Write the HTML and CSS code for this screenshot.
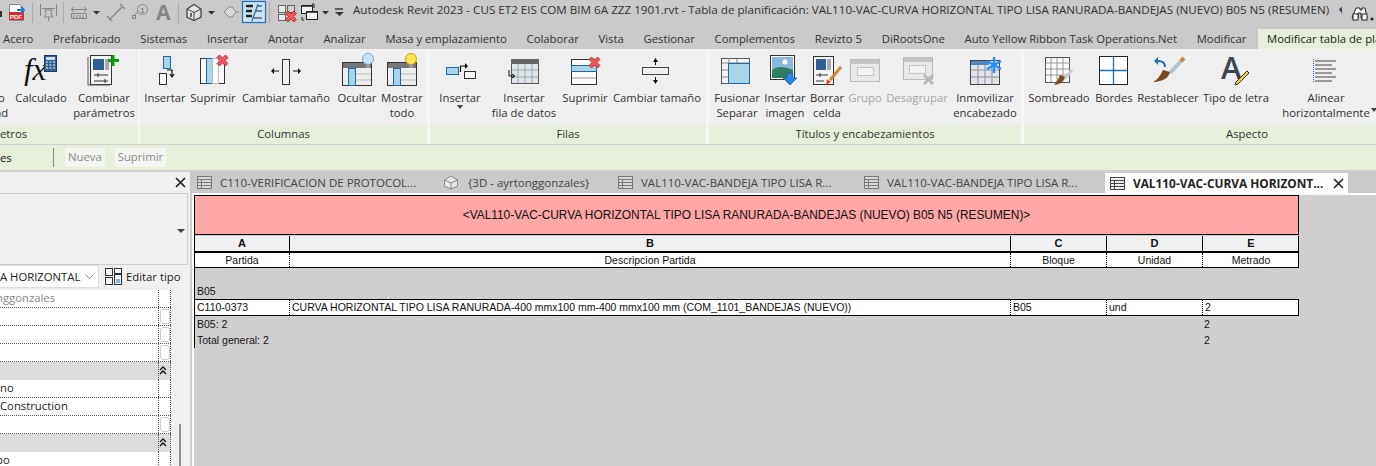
FILE: index.html
```html
<!DOCTYPE html>
<html lang="es">
<head>
<meta charset="utf-8">
<title>Autodesk Revit 2023</title>
<link rel="stylesheet" href="styles.css">
</head>
<body>
<svg width="0" height="0" class="defs">
  <defs>
    <g id="sheet"><rect x=".5" y=".5" width="14" height="12" fill="#d8d8d8" stroke="#777"/><path d="M1 3.500h13M1 6.500h13M1 9.500h13M4.500 3v9" stroke="#777" fill="none"/></g>
    <g id="redx"><path d="M0 2.500L2.500 0 5.500 3 8.500 0 11 2.500 8 5.500l3 3L8.500 11l-3-3-3 3L0 8.500l3-3z" fill="#f0595a" stroke="#a32020" stroke-width=".8"/></g>
    <g id="dbl"><path d="M1 5l3-3 3 3M1 9l3-3 3 3" fill="none" stroke="#111" stroke-width="1.300"/></g>
  </defs>
</svg>
<header class="titlebar">
  <svg class="qat" width="345" height="29" viewBox="0 0 345 29">
    <rect x="0" y="11" width="2" height="6" fill="#333"/>
    <path d="M9.500 4.500h10l4 4v12h-14z" fill="#fff" stroke="#888"/><rect x="9" y="12" width="15" height="8" fill="#d32f2f"/><text x="10" y="19" class="pdf">PDF</text><path d="M17 10h6M21 7l3 3-3 3" stroke="#1976d2" stroke-width="1.800" fill="none"/>
    <path d="M32.500 2v21M63.500 2v21M178.500 2v21M269.500 2v21" stroke="#aaa"/>
    <g stroke="#858585" fill="none">
      <path d="M40.500 4v12M56.500 4v12M42 8.500h13"/><path d="M45 10h7l-1 4 2 3h-9l2-3zM48.500 17v4"/>
      <path d="M71.500 13.500h15v5h-15zM74 15v3M77 15v3M80 15v3M83 15v3M72 9.500h14"/><path d="M74 7l-3 2.500 3 2.500M84 7l3 2.500-3 2.500"/>
      <path d="M109 20l14-14M107 16l5 5M120 4l5 5" stroke-width="1.400"/>
      <rect x="132.500" y="15.500" width="3" height="3"/><path d="M135 15l3-4"/><circle cx="142.500" cy="9.500" r="5"/>
    </g>
    <text x="142.500" y="12.500" class="tag">1</text>
    <path d="M93 11h7l-3.500 3.500zM208 11h7l-3.500 3.500zM322 11h7l-3.500 3.500z" fill="#333"/>
    <text x="156" y="20" class="qat-a">A</text>
    <path d="M187 9l7-4.500 7 4.500v8l-7 3.500-7-3.500z" fill="#e4e4e4" stroke="#444" stroke-width="1.300"/><path d="M187 9l7 3.500 7-3.500M194 12.500v8" stroke="#444" fill="none"/><rect x="190" y="13" width="2" height="4" fill="#666"/>
    <path d="M224 12l5-5h3l4 5-4 5h-3z" fill="#d9d9d9" stroke="#8a8a8a"/><path d="M236 12h3" stroke="#8a8a8a"/>
    <rect x="242.500" y="1.500" width="23" height="21" fill="#cfe3f6" stroke="#1a6fc0" stroke-width="1.200"/><path d="M246 6h7M246 11h6M246 16h6" stroke="#222" stroke-width="2.600"/><path d="M257 6h5M256 11h6M254 18h8" stroke="#222" stroke-width="1"/><path d="M258 4l-6 17" stroke="#1a6fc0" stroke-width="1.300"/>
    <g fill="#e8e8e8" stroke="#666"><rect x="278.500" y="5.500" width="7" height="7"/><rect x="287.500" y="5.500" width="7" height="7" fill="#d0d0d0"/><rect x="278.500" y="14.500" width="7" height="6"/></g><use href="#redx" x="285.500" y="11"/>
    <g fill="#f4f4f4" stroke="#222"><rect x="301.500" y="5.500" width="11" height="8"/><rect x="306.500" y="11.500" width="11" height="8"/></g><path d="M302 6h10M307 12h10" stroke="#222" stroke-width="1.500"/><path d="M314 8V4h-2M302 17v3h2" stroke="#222" fill="none"/>
    <path d="M335 9h8" stroke="#333" stroke-width="1.400"/><path d="M335 12h9l-4.500 4z" fill="#333"/>
  </svg>
  <h1 class="doc-title">Autodesk Revit 2023 - CUS ET2 EIS COM BIM 6A ZZZ 1901.rvt - Tabla de planificación: VAL110-VAC-CURVA HORIZONTAL TIPO LISA RANURADA-BANDEJAS (NUEVO) B05 N5 (RESUMEN)</h1>
  <svg class="search" width="36" height="29" viewBox="0 0 36 29">
    <path d="M2 9.500l3-3v7z" fill="#444"/>
    <path d="M19 8h4v2h2V8h3l2 10h-6v-5h-3v5h-6z" fill="#fff" stroke="#222"/><rect x="16" y="14" width="5" height="6" fill="#fff" stroke="#222"/><rect x="25" y="14" width="5" height="6" fill="#fff" stroke="#222"/>
    <circle cx="35" cy="19" r="1.500" fill="#222"/>
  </svg>
</header>
<nav class="tabs">
  <span class="tab">Acero</span><span class="tab">Prefabricado</span><span class="tab">Sistemas</span><span class="tab">Insertar</span><span class="tab">Anotar</span><span class="tab">Analizar</span><span class="tab">Masa y emplazamiento</span><span class="tab">Colaborar</span><span class="tab">Vista</span><span class="tab">Gestionar</span><span class="tab">Complementos</span><span class="tab">Revizto 5</span><span class="tab">DiRootsOne</span><span class="tab">Auto Yellow Ribbon Task Operations.Net</span><span class="tab">Modificar</span><span class="tab tab-on">Modificar tabla de planificación</span>
</nav>
<section class="ribbon">
  <div class="panel p1">
    <div class="tools">
      <div class="tool w14 clip"><span class="clip-o">o</span><span class="clip-d">ad</span></div>
      <div class="tool w54"><svg class="ico" viewBox="0 0 44 34"><text x="5" y="28" class="fx">fx</text><rect x="25.500" y="3.500" width="12" height="16" fill="#2f5f96" stroke="#1b3b63"/><rect x="27" y="5" width="9" height="3" fill="#cde"/><path d="M27 10h2M30.500 10h2M34 10h2M27 13h2M30.500 13h2M34 13h2M27 16h2M30.500 16h2M34 16h2" stroke="#fff"/></svg><span>Calculado</span></div>
      <div class="tool w72"><svg class="ico" viewBox="0 0 44 34"><rect x="8.500" y="3.500" width="21" height="29" fill="#f2f2f2" stroke="#333"/><path d="M6 5v28h22" fill="none" stroke="#555"/><rect x="11" y="7" width="11" height="11" fill="#2f5f96"/><rect x="23" y="7" width="4" height="11" fill="#aaa"/><path d="M12 23h14M12 29h14M16 21v4M23 27v4" stroke="#333"/><path d="M31 3v11M26 8.500h11" stroke="#0a9a0a" stroke-width="3"/></svg><span>Combinar<br>parámetros</span></div>
    </div>
    <footer class="ptitle"><span>etros</span></footer>
  </div>
  <div class="panel p2">
    <div class="tools">
      <div class="tool w50"><svg class="ico" viewBox="0 0 44 34"><rect x="20.500" y="4.500" width="7" height="12" fill="#a9d3e6" stroke="#1e6aa8"/><rect x="16.500" y="21.500" width="7" height="11" fill="#f6f6f6" stroke="#333"/><path d="M24 18h5v6M27 22l2 3 2-3" fill="none" stroke="#111" stroke-width="1.200"/></svg><span>Insertar</span></div>
      <div class="tool w46"><svg class="ico" viewBox="0 0 44 34"><rect x="9.500" y="6.500" width="24" height="25" fill="#fafafa" stroke="#333"/><rect x="15.500" y="6.500" width="6" height="25" fill="#a9d3e6" stroke="#1e6aa8"/><rect x="21.500" y="6.500" width="6" height="25" fill="#fff" stroke="#bbb"/><use href="#redx" x="26" y="3"/></svg><span>Suprimir</span></div>
      <div class="tool w100"><svg class="ico" viewBox="0 0 44 34"><rect x="18.500" y="7.500" width="7" height="25" fill="#f0f0f0" stroke="#333"/><path d="M9 19h6M29 19h6" stroke="#111"/><path d="M10 16l-3 3 3 3zM34 16l3 3-3 3z" fill="#111"/></svg><span>Cambiar tamaño</span></div>
      <div class="tool w42"><svg class="ico" viewBox="0 0 44 34"><rect x="7.500" y="10.500" width="29" height="23" fill="#eee" stroke="#333"/><rect x="8" y="11" width="28" height="5" fill="#777"/><rect x="13.500" y="16.500" width="7" height="17" fill="#a9d3e6" stroke="#1e6aa8"/><path d="M21 22h15M21 28h15" stroke="#bbb"/><circle cx="33" cy="7" r="5.500" fill="#cfe2fb" stroke="#7b9ec9"/><rect x="31" y="12" width="4" height="4" fill="#999"/></svg><span>Ocultar</span></div>
      <div class="tool w48"><svg class="ico" viewBox="0 0 44 34"><rect x="7.500" y="10.500" width="29" height="23" fill="#eee" stroke="#333"/><rect x="8" y="11" width="28" height="5" fill="#777"/><rect x="13.500" y="16.500" width="7" height="17" fill="#a9d3e6" stroke="#1e6aa8"/><path d="M21 22h15M21 28h15" stroke="#bbb"/><circle cx="31" cy="7" r="5.500" fill="#ffe44d" stroke="#c9a800"/><rect x="29" y="12" width="4" height="4" fill="#999"/></svg><span>Mostrar<br>todo</span></div>
    </div>
    <footer class="ptitle">Columnas</footer>
  </div>
  <div class="panel p3">
    <div class="tools">
      <div class="tool w60"><svg class="ico" viewBox="0 0 44 34"><rect x="8.500" y="15.500" width="12" height="7" fill="#a9d3e6" stroke="#1e6aa8"/><rect x="26.500" y="19.500" width="11" height="7" fill="#f6f6f6" stroke="#333"/><path d="M22.500 20v-6h5" fill="none" stroke="#111" stroke-width="1.200"/><path d="M27 11l3 3-3 3z" fill="#111"/></svg><span>Insertar<br><i class="caret"></i></span></div>
      <div class="tool w68"><svg class="ico" viewBox="0 0 44 34"><rect x="9.500" y="7.500" width="27" height="24" fill="#dfe3ea" stroke="#555"/><rect x="9" y="7" width="28" height="5" fill="#666"/><path d="M10 18h26M10 25h26M16 12v19M23 12v19M30 12v19" stroke="#9aa"/><path d="M7 18v6h5M10 22l3 2-3 2" fill="none" stroke="#111"/></svg><span>Insertar<br>fila de datos</span></div>
      <div class="tool w54"><svg class="ico" viewBox="0 0 44 34"><rect x="8.500" y="7.500" width="25" height="25" fill="#fafafa" stroke="#333"/><rect x="8.500" y="13.500" width="25" height="6" fill="#a9d3e6" stroke="#1e6aa8"/><path d="M9 26h24" stroke="#999"/><use href="#redx" x="26" y="5"/></svg><span>Suprimir</span></div>
      <div class="tool w90"><svg class="ico" viewBox="0 0 44 34"><rect x="7.500" y="15.500" width="26" height="7" fill="#f0f0f0" stroke="#444"/><path d="M20.500 13V8M20.500 25v6" stroke="#111"/><path d="M18 10l2.500-4 2.500 4zM18 28l2.500 4 2.500-4z" fill="#111"/></svg><span>Cambiar tamaño</span></div>
    </div>
    <footer class="ptitle">Filas</footer>
  </div>
  <div class="panel p4">
    <div class="tools">
      <div class="tool w56"><svg class="ico" viewBox="0 0 44 34"><rect x="6.500" y="6.500" width="28" height="25" fill="#f4f4f4" stroke="#555"/><path d="M7 11h27M14 6v6M7 18h7M7 25h7M22 7v4" stroke="#888"/><rect x="13.500" y="11.500" width="21" height="20" fill="#a9d3e6" stroke="#1e6aa8"/></svg><span>Fusionar<br>Separar</span></div>
      <div class="tool w40"><svg class="ico" viewBox="0 0 44 34"><rect x="7.500" y="3.500" width="24" height="24" fill="#fff" stroke="#333"/><rect x="9" y="5" width="21" height="21" fill="#8ab8dc"/><path d="M9 18q7-6 21 0v8H9z" fill="#2f7f5f"/><circle cx="22" cy="10" r="2.500" fill="#fff"/><path d="M24 21h6v5h4l-7 7-7-7h4z" fill="#2c86e0" stroke="#1a5aa0" stroke-width=".7"/></svg><span>Insertar<br>imagen</span></div>
      <div class="tool w44"><svg class="ico" viewBox="0 0 44 34"><rect x="8.500" y="4.500" width="20" height="28" fill="#f4f4f4" stroke="#333"/><rect x="11" y="7" width="10" height="11" fill="#2f5f96"/><rect x="22" y="7" width="4" height="11" fill="#aaa"/><path d="M11 23h12M11 29h8M15 21v4" stroke="#333"/><path d="M36 15L25 28" stroke="#c98a3a" stroke-width="3"/><path d="M22 27l4 3-5 3z" fill="#d9502a"/></svg><span>Borrar<br>celda</span></div>
      <div class="tool w32 off"><svg class="ico" viewBox="0 0 44 34"><rect x="7.500" y="7.500" width="29" height="22" fill="#e8e8e8" stroke="#bbb"/><rect x="8" y="8" width="28" height="4" fill="#c6c6c6"/><rect x="14.500" y="15.500" width="16" height="8" fill="#f3f3f3" stroke="#c4c4c4"/></svg><span>Grupo</span></div>
      <div class="tool w72 off"><svg class="ico" viewBox="0 0 44 34"><rect x="8.500" y="5.500" width="29" height="22" fill="#e8e8e8" stroke="#bbb"/><rect x="9" y="6" width="28" height="4" fill="#c6c6c6"/><rect x="14.500" y="13.500" width="16" height="8" fill="#f3f3f3" stroke="#c4c4c4"/><path d="M29 23l9 9M38 23l-9 9" stroke="#b9b9b9" stroke-width="3"/></svg><span>Desagrupar</span></div>
      <div class="tool w64"><svg class="ico" viewBox="0 0 44 34"><rect x="7.500" y="8.500" width="29" height="24" fill="#e2e4ea" stroke="#444"/><rect x="8" y="9" width="18" height="4" fill="#4f86c0"/><path d="M8 18h28M8 25h28M15 13v19M22 13v19M29 13v19" stroke="#8a8f96"/><path d="M31 5v16M24 9l14 8M38 9l-14 8" stroke="#2d8ff0" stroke-width="2.500"/></svg><span>Inmovilizar<br>encabezado</span></div>
    </div>
    <footer class="ptitle">Títulos y encabezamientos</footer>
  </div>
  <div class="panel p5">
    <div class="tools">
      <div class="tool w70"><svg class="ico" viewBox="0 0 44 34"><rect x="8.500" y="5.500" width="24" height="25" fill="#fafafa" stroke="#555"/><path d="M9 11h24M9 17h24M9 23h24M14 6v24M20 6v24M26 6v24" stroke="#999"/><path d="M35 18L27 27" stroke="#c8ccd0" stroke-width="3"/><path d="M28 25q-2 7-11 8 3-3 6-10z" fill="#7a4a22"/></svg><span>Sombreado</span></div>
      <div class="tool w40"><svg class="ico" viewBox="0 0 44 34"><rect x="7.500" y="4.500" width="28" height="28" fill="#fff" stroke="#222"/><path d="M21.500 5v27M8 18.500h27" stroke="#1a6fc0" stroke-width="1.300"/></svg><span>Bordes</span></div>
      <div class="tool w68"><svg class="ico" viewBox="0 0 44 34"><path d="M36 8L24 21" stroke="#b9c2cc" stroke-width="4"/><path d="M38 6l-3 3" stroke="#c98a3a" stroke-width="4"/><path d="M24 20q-2 9-17 10 6-3 10-12z" fill="#7a4a22"/><path d="M19 15q0-6-7-6H9" fill="none" stroke="#1a6fc0" stroke-width="2"/><path d="M12 5l-4 4 4 4z" fill="#1a6fc0"/></svg><span>Restablecer</span></div>
      <div class="tool w68"><svg class="ico" viewBox="0 0 44 34"><text x="7" y="27" class="big-a">A</text><path d="M35 21L24 32l-3 1 1-3 11-11z" fill="#f7d245" stroke="#333"/></svg><span>Tipo de letra</span></div>
      <div class="tool w112"><svg class="ico" viewBox="0 0 44 34"><path d="M9.500 7v24" stroke="#1a6fc0" stroke-dasharray="1 1" fill="none"/><path d="M11 9h21M11 13h17M11 17h21M11 21h17M11 25h21M11 29h17" stroke="#444"/></svg><span>Alinear<br>horizontalmente</span><i class="caret caret-side"></i></div>
    </div>
    <footer class="ptitle">Aspecto</footer>
  </div>
</section>
<section class="context">
  <span class="ctx-label">es</span>
  <span class="ctx-sep"></span>
  <span class="ctx-btn">Nueva</span>
  <span class="ctx-btn">Suprimir</span>
</section>
<main class="work">
  <aside class="props">
    <div class="props-head"><svg class="x-ico" width="11" height="11" viewBox="0 0 11 11"><path d="M1 1l9 9M10 1l-9 9" stroke="#222" stroke-width="1.700"/></svg></div>
    <div class="type-box"><i class="caret type-caret"></i></div>
    <div class="type-row">
      <div class="type-select"><span>A HORIZONTAL</span><svg width="9" height="5" viewBox="0 0 9 5"><path d="M.5.500l4 4 4-4" fill="none" stroke="#888"/></svg></div>
      <svg class="edit-ico" width="17" height="17" viewBox="0 0 17 17"><g fill="#f4f4f4" stroke="#333"><rect x=".5" y=".5" width="7" height="7"/><rect x="9.500" y=".5" width="7" height="5"/><rect x=".5" y="9.500" width="7" height="7"/><rect x="9.500" y="6.500" width="7" height="10"/></g><path d="M11 12h4M11 14h4" stroke="#1a6fc0"/></svg>
      <span>Editar tipo</span>
    </div>
    <div class="grid-wrap">
      <div class="pgrid">
        <div class="prow"><span class="pval muted"><span class="cut4">nggonzales</span></span><span class="pchk"></span></div>
        <div class="prow"><span class="pval"></span><span class="pchk"><i class="cbox"></i></span></div>
        <div class="prow"><span class="pval"></span><span class="pchk"><i class="cbox"></i></span></div>
        <div class="prow"><span class="pval"></span><span class="pchk"><i class="cbox"></i></span></div>
        <div class="prow phead"><span class="pval"></span><span class="pchk"><svg class="dbl" width="8" height="11" viewBox="0 0 8 11"><use href="#dbl"/></svg></span></div>
        <div class="prow"><span class="pval">no</span><span class="pchk"></span></div>
        <div class="prow"><span class="pval">Construction</span><span class="pchk"></span></div>
        <div class="prow"><span class="pval"></span><span class="pchk"><i class="cbox"></i></span></div>
        <div class="prow phead"><span class="pval"></span><span class="pchk"><svg class="dbl" width="8" height="11" viewBox="0 0 8 11"><use href="#dbl"/></svg></span></div>
        <div class="prow"><span class="pval"><span class="cut4">po</span></span><span class="pchk"></span></div>
      </div>
      <i class="scroll-thumb"></i>
    </div>
  </aside>
  <div class="views">
    <div class="vtabs">
      <div class="vtab vt1"><svg class="vico" viewBox="0 0 15 13"><use href="#sheet"/></svg><span>C110-VERIFICACION DE PROTOCOL...</span></div>
      <div class="vtab vt2"><svg class="vico vico3d" viewBox="0 0 15 15"><path d="M1 5l6.500-4L14 5v6l-6.500 3L1 11z" fill="#e8e8e8" stroke="#888"/><path d="M1 5l6.500 3L14 5M7.500 8v6" stroke="#888" fill="none"/></svg><span>{3D - ayrtonggonzales}</span></div>
      <div class="vtab vt3"><svg class="vico" viewBox="0 0 15 13"><use href="#sheet"/></svg><span>VAL110-VAC-BANDEJA TIPO LISA R...</span></div>
      <div class="vtab vt3"><svg class="vico" viewBox="0 0 15 13"><use href="#sheet"/></svg><span>VAL110-VAC-BANDEJA TIPO LISA R...</span></div>
      <div class="vtab vtab-on"><svg class="vico" viewBox="0 0 15 13"><rect x=".5" y=".5" width="14" height="12" fill="#eee" stroke="#444"/><path d="M1 3.500h13M1 6.500h13M1 9.500h13M4.500 3v9" stroke="#444"/></svg><span class="vtab-text">VAL110-VAC-CURVA HORIZONT...</span><svg class="x-ico" width="11" height="11" viewBox="0 0 11 11"><path d="M1 1l9 9M10 1l-9 9" stroke="#222" stroke-width="1.600"/></svg></div>
    </div>
    <div class="sheet">
      <div class="schedule">
        <div class="s-title">&lt;VAL110-VAC-CURVA HORIZONTAL TIPO LISA RANURADA-BANDEJAS (NUEVO) B05 N5 (RESUMEN)&gt;</div>
        <div class="s-row s-letters"><b>A</b><b>B</b><b>C</b><b>D</b><b>E</b></div>
        <div class="s-row s-fields"><span>Partida</span><span>Descripcion Partida</span><span>Bloque</span><span>Unidad</span><span>Metrado</span></div>
        <div class="s-blank"></div>
        <div class="s-group">B05</div>
        <div class="s-row s-data"><span>C110-0373</span><span>CURVA HORIZONTAL TIPO LISA RANURADA-400 mmx100 mm-400 mmx100 mm (COM_1101_BANDEJAS (NUEVO))</span><span>B05</span><span>und</span><span>2</span></div>
        <div class="s-row s-sum"><span class="s-wide">B05: 2</span><span>2</span></div>
        <div class="s-row s-sum"><span class="s-wide">Total general: 2</span><span>2</span></div>
      </div>
    </div>
  </div>
</main>
</body>
</html>
```
FILE: styles.css
```css
* { box-sizing: border-box; }
html, body { margin: 0; padding: 0; }
body {
  width: 1376px;
  height: 466px;
  overflow: hidden;
  background: #c9c9c9;
  color: #222;
  font: 11.3px/15px "Open Sans", "Noto Sans", sans-serif;
}
.defs { position: absolute; }

.titlebar { display: flex; height: 29px; background: #c9c9c9; align-items: flex-start; }
.qat { flex: none; display: block; }
.pdf { font: 700 6px "Liberation Sans", sans-serif; fill: #fff; }
.tag { font: 8px "Liberation Sans", sans-serif; fill: #666; text-anchor: middle; }
.qat-a { font: 700 21px "Open Sans", sans-serif; fill: #858585; }
.doc-title { margin: 0 0 0 8px; flex: none; width: 976px; font: inherit; font-size: 11.65px; line-height: 20px; color: #333; white-space: nowrap; }
.search { flex: none; margin-left: 8px; overflow: visible; }

.tabs { display: flex; height: 20px; padding-left: 3px; gap: 19.7px; background: #c9c9c9; line-height: 19px; white-space: nowrap; overflow: hidden; }
.tab { flex: none; color: #333; }
.tab-on { background: #e6efda; margin-left: -8px; padding: 0 9px; color: #222; }

.ribbon { display: flex; height: 96px; background: #f5f5f5; border-bottom: 1px solid #cfcfcf; overflow: hidden; }
.panel { flex: none; display: flex; flex-direction: column; }
.p1 { width: 138px; margin-right: 2px; }
.p2 { width: 287px; margin-right: 3px; }
.p3 { width: 276px; margin-right: 3px; }
.p4 { width: 312px; margin-right: 3px; }
.p5 { width: 446px; }
.tools { display: flex; height: 76px; background: #efefef; }
.tool { position: relative; flex: none; display: flex; flex-direction: column; align-items: center; padding-top: 3px; text-align: center; white-space: nowrap; color: #333; }
.tool > span { margin-top: 4px; display: block; }
.ico { width: 44px; height: 34px; flex: none; display: block; }
.w14 { width: 14px; } .w32 { width: 32px; } .w40 { width: 40px; } .w42 { width: 42px; } .w44 { width: 44px; } .w46 { width: 46px; } .w48 { width: 48px; } .w50 { width: 50px; } .w54 { width: 54px; } .w56 { width: 56px; } .w60 { width: 60px; } .w64 { width: 64px; } .w68 { width: 68px; } .w70 { width: 70px; } .w72 { width: 72px; } .w90 { width: 90px; } .w100 { width: 100px; } .w112 { width: 112px; }
.clip { padding-top: 41px; align-items: flex-start; }
.clip > .clip-o { margin: 0 0 0 -2px; }
.clip > .clip-d { margin: 0 0 0 -5px; }
.off { color: #a6a6a6; }
.fx { font: italic 400 31px "Liberation Serif", serif; fill: #111; }
.big-a { font: 600 31px "Open Sans", sans-serif; fill: #3a4552; }
.caret { display: inline-block; width: 0; height: 0; border: 3px solid transparent; border-top: 4px solid #444; border-bottom: 0; vertical-align: top; }
.caret-side { position: absolute; left: 101px; top: 59px; }
.ptitle { height: 19px; background: #e6efda; text-align: center; line-height: 18px; color: #333; }
.p1 .ptitle { text-align: left; }

.context { display: flex; align-items: center; height: 27px; background: #e6efda; border-bottom: 2px solid #d0d0d0; }
.ctx-label { width: 53px; color: #111; }
.ctx-sep { width: 1px; height: 19px; background: #888; margin-right: 11px; }
.ctx-btn { height: 19px; padding: 0 3px; margin-right: 10px; background: #f4f5f1; border-radius: 2px; color: #8a8a8a; line-height: 18px; }

.work { display: flex; height: 294px; }
.props { flex: none; width: 190px; background: #f0f0f0; position: relative; }
.props-head { height: 21px; display: flex; justify-content: flex-end; align-items: center; padding-right: 4px; }
.x-ico { flex: none; display: block; }
.type-box { position: relative; height: 72px; width: 188px; border: 1px solid #ccc; border-left: 0; }
.type-caret { position: absolute; right: 2px; top: 35px; border-width: 4px; border-top-color: #444; border-bottom: 0; }
.type-row { display: flex; align-items: center; height: 25px; padding-bottom: 2px; white-space: nowrap; }
.type-select { display: flex; align-items: center; justify-content: space-between; width: 99px; height: 23px; padding-right: 4px; margin-right: 6px; background: #fff; border: 1px solid #ddd; border-left: 0; }
.edit-ico { margin-right: 4px; }
.grid-wrap { display: flex; }
.pgrid { width: 171px; background: #fff; }
.prow { display: grid; grid-template-columns: 158px 13px; height: 18px; border-bottom: 1px dotted #555; line-height: 15px; }
.pval { overflow: hidden; white-space: nowrap; }
.cut4 { display: inline-block; margin-left: -4px; }
.muted { color: #888; }
.pchk { border-left: 1px dotted #555; border-right: 1px dotted #555; display: flex; justify-content: flex-start; align-items: flex-start; }
.phead { background: #dcdcdc; border-bottom: 0; }
.dbl { margin-top: 3px; }
.cbox { display: block; width: 10px; height: 15px; margin: 1px 0 0 1px; background: #fff; border: 1px solid #ccc; border-radius: 3px; }
.scroll-thumb { position: absolute; left: 179px; top: 252px; width: 2px; height: 42px; background: #8f8f8f; }

.views { flex: 1; min-width: 0; display: flex; flex-direction: column; background: #cfcfcf; }
.vtabs { display: flex; height: 21px; padding-left: 7px; background: #c9c9c9; white-space: nowrap; font-size: 11.5px; line-height: 20px; color: #444; }
.vtab { flex: none; display: flex; align-items: center; }
.vico { width: 15px; height: 13px; flex: none; margin-right: 8px; overflow: visible; }
.vico3d { height: 15px; width: 16px; margin-left: -2px; margin-right: 9px; }
.vt1 { width: 248px; }
.vt2 { width: 173px; }
.vt3 { width: 246px; }
.vtab-on { width: 243px; margin-left: -5px; padding-left: 5px; margin-top: 1px; background: #fff; color: #222; font-weight: 700; font-size: 11.85px; }
.vtab-text { width: 200px; }
.sheet { flex: 1; margin-left: 2px; border-left: 2px solid #fff; border-top: 2px solid #fff; font: 10.5px/15px "Liberation Sans", sans-serif; color: #111; }
.schedule { width: 1105px; border-left: 1px solid #000; height: 153px; }
.s-title { height: 40px; background: #ffa6a6; border: 1px solid #000; border-left: 0; text-align: center; line-height: 38px; font-size: 11.9px; }
.s-row { display: grid; grid-template-columns: 94px 721px 96px 96px 97px; }
.s-letters { height: 17px; margin-top: 1px; background: #f0f0f0; border-bottom: 2px solid #000; border-right: 1px solid #000; text-align: center; line-height: 15px; font-size: 11px; }
.s-letters b { border-left: 1px solid #000; }
.s-letters b:first-child { border-left: 0; }
.s-fields { height: 15px; background: #fff; border-bottom: 1px solid #000; border-right: 1px solid #000; text-align: center; line-height: 14px; }
.s-fields span, .s-data span { border-left: 1px dotted #000; }
.s-fields span:first-child, .s-data span:first-child { border-left: 0; }
.s-blank { height: 15px; }
.s-group { height: 16px; padding-left: 2px; line-height: 16px; }
.s-data { height: 17px; background: #fff; border-top: 1px solid #000; border-bottom: 1px solid #000; border-right: 1px solid #000; line-height: 15px; }
.s-data span { padding-left: 2px; }
.s-sum { height: 16px; line-height: 16px; }
.s-sum span { padding-left: 2px; }
.s-wide { grid-column: 1 / 5; }
```
